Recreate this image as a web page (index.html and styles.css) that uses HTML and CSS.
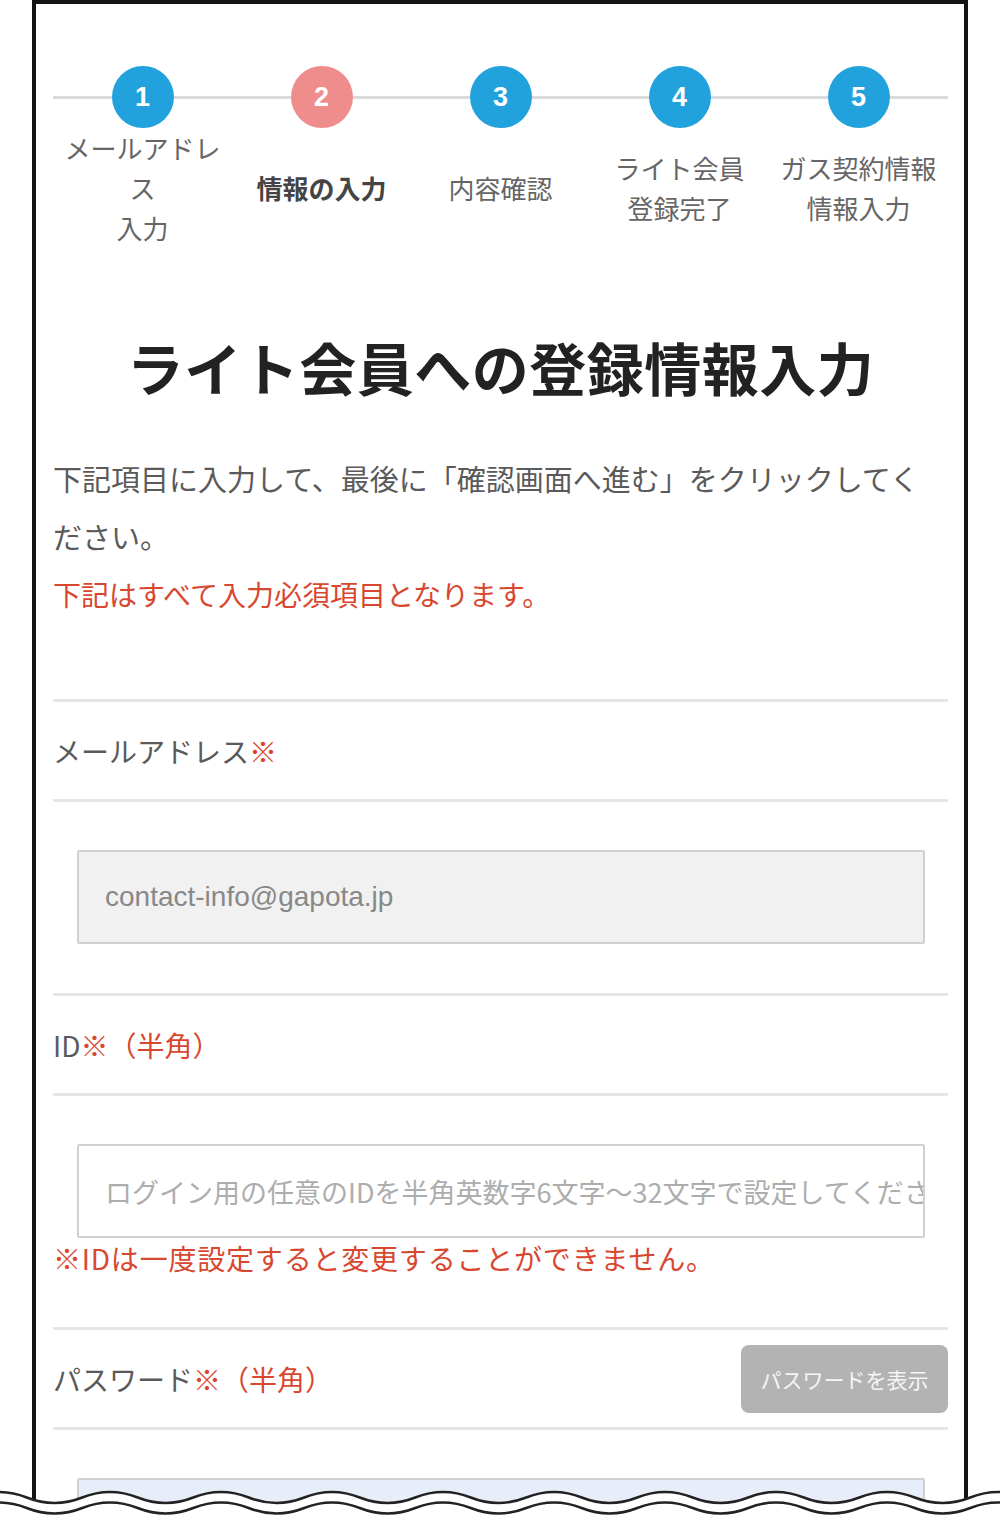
FILE: index.html
```html
<!DOCTYPE html>
<html lang="ja">
<head>
    <meta charset="UTF-8">
    <meta name="viewport" content="width=device-width, initial-scale=1.0">
    <title>ライト会員への登録情報入力</title>
    <link rel="stylesheet" href="styles.css">
</head>
<body>

<div class="screen">
    <div class="phone">

        <!-- ステップ表示 -->
        <ol class="steps">
            <li class="step">
                <span class="step-num">1</span>
                <span class="step-label"><span>メールアドレス<br>入力</span></span>
            </li>
            <li class="step step-current">
                <span class="step-num">2</span>
                <span class="step-label"><span>情報の入力</span></span>
            </li>
            <li class="step">
                <span class="step-num">3</span>
                <span class="step-label"><span>内容確認</span></span>
            </li>
            <li class="step">
                <span class="step-num">4</span>
                <span class="step-label"><span>ライト会員<br>登録完了</span></span>
            </li>
            <li class="step">
                <span class="step-num">5</span>
                <span class="step-label"><span>ガス契約情報<br>情報入力</span></span>
            </li>
        </ol>

        <h1 class="page-title">ライト会員への登録情報入力</h1>

        <p class="lead">下記項目に入力して、最後に「確認画面へ進む」をクリックしてください。</p>
        <p class="lead lead-required">下記はすべて入力必須項目となります。</p>

        <form class="entry-form">
            <div class="field">
                <div class="field-head">
                    <label for="mail">メールアドレス<span class="req">※</span></label>
                </div>
                <div class="field-body">
                    <input type="email" id="mail" class="input input-readonly" value="contact-info@gapota.jp" readonly>
                </div>
            </div>

            <div class="field">
                <div class="field-head">
                    <label for="login-id">ID<span class="req">※（半角）</span></label>
                </div>
                <div class="field-body">
                    <input type="text" id="login-id" class="input" placeholder="ログイン用の任意のIDを半角英数字6文字～32文字で設定してください">
                    <p class="note">※IDは一度設定すると変更することができません。</p>
                </div>
            </div>

            <div class="field">
                <div class="field-head">
                    <label for="password">パスワード<span class="req">※（半角）</span></label>
                    <button type="button" class="btn-show">パスワードを表示</button>
                </div>
                <div class="field-body">
                    <input type="password" id="password" class="input input-password">
                </div>
            </div>
        </form>

    </div>

    <!-- 下端の波線（省略表示） -->
    <svg class="torn-edge" width="1000" height="40" viewBox="0 0 1000 40">
        <defs>
            <path id="wave" d="M -28.75 17.5 Q -1 6.5 26.75 17.5 T 82.25 17.5 T 137.75 17.5 T 193.25 17.5 T 248.75 17.5 T 304.25 17.5 T 359.75 17.5 T 415.25 17.5 T 470.75 17.5 T 526.25 17.5 T 581.75 17.5 T 637.25 17.5 T 692.75 17.5 T 748.25 17.5 T 803.75 17.5 T 859.25 17.5 T 914.75 17.5 T 970.25 17.5 T 1025.75 17.5"/>
        </defs>
        <path class="torn-fill" d="M -28.75 17.5 Q -1 6.5 26.75 17.5 T 82.25 17.5 T 137.75 17.5 T 193.25 17.5 T 248.75 17.5 T 304.25 17.5 T 359.75 17.5 T 415.25 17.5 T 470.75 17.5 T 526.25 17.5 T 581.75 17.5 T 637.25 17.5 T 692.75 17.5 T 748.25 17.5 T 803.75 17.5 T 859.25 17.5 T 914.75 17.5 T 970.25 17.5 T 1025.75 17.5 L 1030 40 L -30 40 Z"/>
        <use href="#wave" class="torn-line"/>
        <use href="#wave" class="torn-line" transform="translate(0 10.5)"/>
    </svg>
</div>

</body>
</html>
```

FILE: styles.css
```css
body {
    margin: 0;
    background-color: #fff;
    font-family: "Noto Sans CJK JP", "Noto Sans", sans-serif;
    color: #5a5a5a;
}

.screen {
    position: relative;
    height: 1518px;
    overflow: hidden;
}

.phone {
    box-sizing: border-box;
    width: 936px;
    min-height: 1518px;
    margin-left: 32px;
    padding: 0 16px 0 17px;
    border: 4px solid #141414;
    border-bottom: 0;
}

/* steps */
.steps {
    position: relative;
    display: grid;
    grid-template-columns: repeat(5, 1fr);
    margin: 0;
    padding: 62px 0 0;
    list-style: none;
}

.steps::before {
    content: "";
    position: absolute;
    top: 92px;
    left: 0;
    right: 0;
    height: 3px;
    background-color: #dadada;
}

.step {
    display: flex;
    flex-direction: column;
    align-items: center;
}

.step-num {
    position: relative;
    z-index: 1;
    display: flex;
    align-items: center;
    justify-content: center;
    width: 62px;
    height: 62px;
    border-radius: 50%;
    background-color: #22a2dd;
    color: #fff;
    font-family: "Liberation Sans", Arial, sans-serif;
    font-size: 27px;
    font-weight: bold;
}

.step-current .step-num {
    background-color: #ef8d8d;
}

.step-label {
    flex: 1;
    display: flex;
    align-items: center;
    justify-content: center;
    width: 100%;
    margin-top: 0;
    text-align: center;
    font-size: 26px;
    line-height: 40px;
    color: #666;
}

.step-current .step-label {
    font-weight: bold;
    color: #444;
}

/* heading */
.page-title {
    margin: 75px 0 0;
    text-align: center;
    font-size: 57px;
    line-height: 86px;
    font-weight: bold;
    letter-spacing: 0.5px;
    color: #222;
}

.lead {
    max-width: 880px;
    margin: 40px 0 0;
    font-size: 29px;
    line-height: 58px;
    color: #5a5a5a;
}

.lead-required {
    margin-top: 0;
    font-size: 28px;
    color: #d8472f;
}

/* form */
.entry-form {
    margin-top: 76px;
}

.field-head {
    display: flex;
    align-items: center;
    justify-content: space-between;
    height: 97px;
    border-top: 3px solid #e6e6e6;
    border-bottom: 3px solid #e6e6e6;
    font-size: 28px;
    color: #5a5a5a;
}

.req {
    color: #d8472f;
}

.field-body {
    padding: 48px 0 49px;
}

.input {
    display: block;
    box-sizing: border-box;
    width: calc(100% - 47px);
    height: 94px;
    margin: 0 23px 0 24px;
    padding: 0 0 0 26px;
    border: 2px solid #d0d0d0;
    border-radius: 2px;
    background-color: #fff;
    font-family: "Noto Sans CJK JP", sans-serif;
    font-size: 27px;
    color: #888;
    outline: none;
}

.input::placeholder {
    color: #adadad;
}

.input-readonly {
    background-color: #f1f1f1;
    font-family: "Liberation Sans", Arial, sans-serif;
    font-size: 28px;
}

.input-password {
    background-color: #e8eef9;
}

.note {
    margin: 0;
    font-size: 28px;
    line-height: 40px;
    letter-spacing: 0.8px;
    color: #d8472f;
}

.btn-show {
    width: 207px;
    height: 68px;
    border: 0;
    border-radius: 8px;
    background-color: #b3b3b3;
    color: #f5f5f5;
    font-family: "Noto Sans CJK JP", sans-serif;
    font-size: 21px;
    cursor: pointer;
}

/* bottom edge */
.torn-edge {
    position: absolute;
    top: 1480px;
    left: 0;
}

.torn-fill {
    fill: #fff;
}

.torn-line {
    fill: none;
    stroke: #222;
    stroke-width: 2.6;
}
```
